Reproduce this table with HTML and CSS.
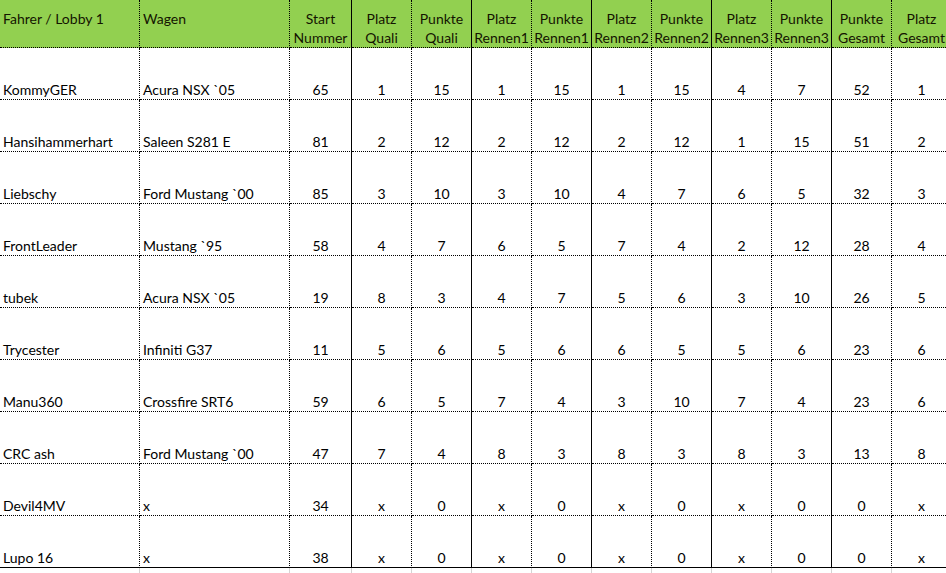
FILE: index.html
```html
<!DOCTYPE html>
<html lang="de">
<head>
<meta charset="utf-8">
<title>Fahrer / Lobby 1</title>
<link rel="stylesheet" href="styles.css">
</head>
<body>
<table class="sheet">
  <colgroup>
    <col class="c-name"><col class="c-car"><col class="c-start">
    <col class="c-n"><col class="c-n"><col class="c-n"><col class="c-n"><col class="c-n">
    <col class="c-n"><col class="c-n"><col class="c-n"><col class="c-n"><col class="c-n">
  </colgroup>
  <thead>
    <tr class="head">
      <th class="left dot">Fahrer / Lobby 1</th>
      <th class="left dot">Wagen</th>
      <th class="solid">Start<br>Nummer</th>
      <th class="dot">Platz<br>Quali</th>
      <th class="solid">Punkte<br>Quali</th>
      <th class="dot">Platz<br>Rennen1</th>
      <th class="solid">Punkte<br>Rennen1</th>
      <th class="dot">Platz<br>Rennen2</th>
      <th class="solid">Punkte<br>Rennen2</th>
      <th class="dot">Platz<br>Rennen3</th>
      <th class="solid">Punkte<br>Rennen3</th>
      <th class="dot">Punkte<br>Gesamt</th>
      <th class="dot">Platz<br>Gesamt</th>
    </tr>
  </thead>
  <tbody>
    <tr><td class="left dot">KommyGER</td><td class="left dot">Acura NSX `05</td><td class="solid">65</td><td class="dot">1</td><td class="solid">15</td><td class="dot">1</td><td class="solid">15</td><td class="dot">1</td><td class="solid">15</td><td class="dot">4</td><td class="solid">7</td><td class="dot">52</td><td class="dot">1</td></tr>
    <tr><td class="left dot">Hansihammerhart</td><td class="left dot">Saleen S281 E</td><td class="solid">81</td><td class="dot">2</td><td class="solid">12</td><td class="dot">2</td><td class="solid">12</td><td class="dot">2</td><td class="solid">12</td><td class="dot">1</td><td class="solid">15</td><td class="dot">51</td><td class="dot">2</td></tr>
    <tr><td class="left dot">Liebschy</td><td class="left dot">Ford Mustang `00</td><td class="solid">85</td><td class="dot">3</td><td class="solid">10</td><td class="dot">3</td><td class="solid">10</td><td class="dot">4</td><td class="solid">7</td><td class="dot">6</td><td class="solid">5</td><td class="dot">32</td><td class="dot">3</td></tr>
    <tr><td class="left dot">FrontLeader</td><td class="left dot">Mustang `95</td><td class="solid">58</td><td class="dot">4</td><td class="solid">7</td><td class="dot">6</td><td class="solid">5</td><td class="dot">7</td><td class="solid">4</td><td class="dot">2</td><td class="solid">12</td><td class="dot">28</td><td class="dot">4</td></tr>
    <tr><td class="left dot">tubek</td><td class="left dot">Acura NSX `05</td><td class="solid">19</td><td class="dot">8</td><td class="solid">3</td><td class="dot">4</td><td class="solid">7</td><td class="dot">5</td><td class="solid">6</td><td class="dot">3</td><td class="solid">10</td><td class="dot">26</td><td class="dot">5</td></tr>
    <tr><td class="left dot">Trycester</td><td class="left dot">Infiniti G37</td><td class="solid">11</td><td class="dot">5</td><td class="solid">6</td><td class="dot">5</td><td class="solid">6</td><td class="dot">6</td><td class="solid">5</td><td class="dot">5</td><td class="solid">6</td><td class="dot">23</td><td class="dot">6</td></tr>
    <tr><td class="left dot">Manu360</td><td class="left dot">Crossfire SRT6</td><td class="solid">59</td><td class="dot">6</td><td class="solid">5</td><td class="dot">7</td><td class="solid">4</td><td class="dot">3</td><td class="solid">10</td><td class="dot">7</td><td class="solid">4</td><td class="dot">23</td><td class="dot">6</td></tr>
    <tr><td class="left dot">CRC ash</td><td class="left dot">Ford Mustang `00</td><td class="solid">47</td><td class="dot">7</td><td class="solid">4</td><td class="dot">8</td><td class="solid">3</td><td class="dot">8</td><td class="solid">3</td><td class="dot">8</td><td class="solid">3</td><td class="dot">13</td><td class="dot">8</td></tr>
    <tr><td class="left dot">Devil4MV</td><td class="left dot">x</td><td class="solid">34</td><td class="dot">x</td><td class="solid">0</td><td class="dot">x</td><td class="solid">0</td><td class="dot">x</td><td class="solid">0</td><td class="dot">x</td><td class="solid">0</td><td class="dot">0</td><td class="dot">x</td></tr>
    <tr class="last"><td class="left dot">Lupo 16</td><td class="left dot">x</td><td class="solid">38</td><td class="dot">x</td><td class="solid">0</td><td class="dot">x</td><td class="solid">0</td><td class="dot">x</td><td class="solid">0</td><td class="dot">x</td><td class="solid">0</td><td class="dot">0</td><td class="dot">x</td></tr>
    <tr class="grid"><td></td><td></td><td></td><td></td><td></td><td></td><td></td><td></td><td></td><td></td><td></td><td></td><td></td></tr>
  </tbody>
</table>
</body>
</html>
```
FILE: styles.css
```css
html, body {
  margin: 0;
  padding: 0;
  background: #ffffff;
  overflow: hidden;
}

.sheet {
  border-collapse: separate;
  border-spacing: 0;
  table-layout: fixed;
  width: 951px;
  font-family: Lato, "Liberation Sans", sans-serif;
  font-size: 14px;
  color: #000000;
}

.c-name { width: 140px; }
.c-car { width: 150px; }
.c-start { width: 62px; }
.c-n { width: 60px; }

.sheet th,
.sheet td {
  box-sizing: border-box;
  padding: 0 1px;
  text-align: center;
  white-space: nowrap;
  overflow: hidden;
  border-bottom: 1px dotted #000000;
}

.sheet .dot { border-right: 1px dotted #000000; }
.sheet .solid { border-right: 1px solid #000000; }
.sheet .left { text-align: left; padding-left: 3px; }

.head th {
  height: 48px;
  background: #92d050;
  font-weight: normal;
  line-height: 19px;
  vertical-align: top;
  padding-top: 9px;
  color: #141400;
}

.sheet tbody td {
  height: 52px;
  line-height: 18px;
  vertical-align: bottom;
  padding-bottom: 0;
}

.sheet tbody tr.last td {
  border-bottom: 1px solid #000000;
}

.sheet tbody tr.grid td {
  height: 10px;
  border-bottom: none;
  border-right: 1px solid #d4d4d4;
  padding: 0;
}
```
